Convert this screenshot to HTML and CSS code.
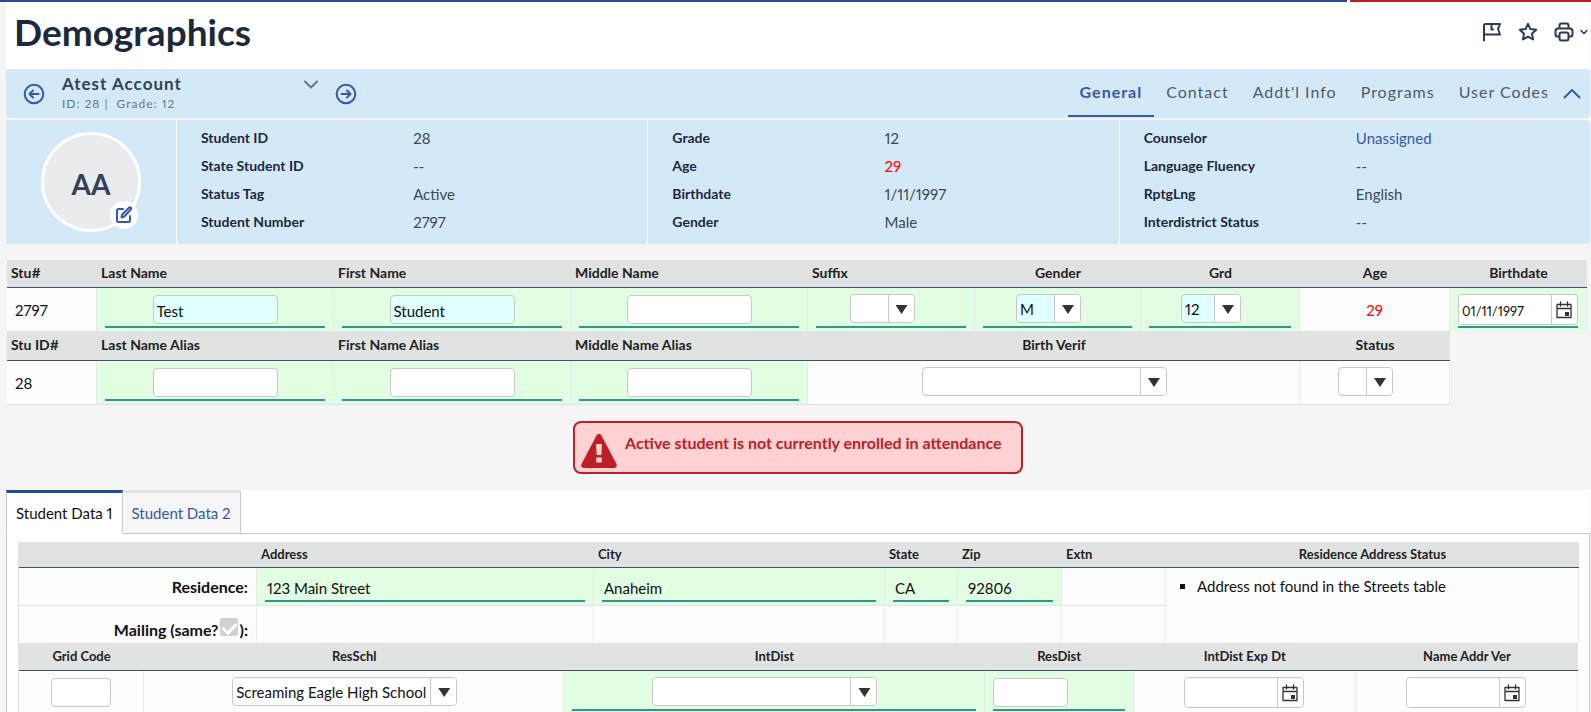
FILE: index.html
```html
<!DOCTYPE html>
<html lang="en">
<head>
    <meta charset="UTF-8">
    <meta name="viewport" content="width=device-width, initial-scale=1.0">
    <title>Demographics</title>
    <link rel="stylesheet" href="styles.css">
</head>
<body>
    <div class="top-bar"><span class="top-blue"></span><span class="top-red"></span></div>

    <div class="page">
        <header class="page-header">
            <h1>Demographics</h1>
            <div class="page-tools">
                <button type="button" class="icon-btn" aria-label="Flag">
                    <svg width="20" height="20" viewBox="0 0 20 20" class="line-icon"><path d="M2 18.500V3.500q0-1.500 1.500-1.500H18l-2 5 2 5.500H2M9.500 2v5.500h1.500"/></svg>
                </button>
                <button type="button" class="icon-btn" aria-label="Favorite">
                    <svg width="20" height="20" viewBox="0 0 20 20" class="line-icon"><path d="M10 1.800l2.400 5.300 5.800.7-4.300 3.900 1.200 5.800-5.100-2.900-5.100 2.900 1.200-5.800L1.800 7.800l5.800-.7z"/></svg>
                </button>
                <button type="button" class="icon-btn" aria-label="Print">
                    <svg width="20" height="20" viewBox="0 0 20 20" class="line-icon"><path d="M5.500 6.500V3.500q0-2 2-2h5q2 0 2 2v3M5.500 14.500h-2q-2 0-2-2V9q0-2.500 2.500-2.500h12q2.500 0 2.500 2.500v3.500q0 2-2 2h-2M7.500 10.500h5q2 0 2 2v4q0 2-2 2h-5q-2 0-2-2v-4q0-2 2-2z"/></svg>
                    <svg width="8" height="6" viewBox="0 0 8 6" class="thin-icon"><path d="M1 1.500l3 3 3-3"/></svg>
                </button>
            </div>
        </header>

        <div class="student-bar">
            <button type="button" class="icon-btn" aria-label="Previous student">
                <svg width="22" height="22" viewBox="0 0 22 22" class="blue-icon"><circle cx="11" cy="11" r="9.300"/><path d="M15.500 11H7M10 7.500L6.500 11l3.500 3.500"/></svg>
            </button>
            <div class="student-pick">
                <div>
                    <div class="student-name">Atest Account</div>
                    <div class="student-meta">ID: 28 |&nbsp; Grade: 12</div>
                </div>
                <button type="button" class="icon-btn" aria-label="Choose student">
                    <svg width="14" height="9" viewBox="0 0 14 9" class="gray-icon"><path d="M1 1.500l6 6 6-6"/></svg>
                </button>
            </div>
            <button type="button" class="icon-btn" aria-label="Next student">
                <svg width="22" height="22" viewBox="0 0 22 22" class="blue-icon"><circle cx="11" cy="11" r="9.300"/><path d="M6.500 11H15M12 7.500l3.500 3.500-3.500 3.500"/></svg>
            </button>
            <nav class="student-nav">
                <a href="#" class="active">General</a>
                <a href="#">Contact</a>
                <a href="#">Addt'l Info</a>
                <a href="#">Programs</a>
                <a href="#">User Codes</a>
            </nav>
            <button type="button" class="icon-btn collapse" aria-label="Collapse">
                <svg width="18" height="11" viewBox="0 0 18 11" class="blue-icon"><path d="M1.500 9.500L9 2l7.500 7.500"/></svg>
            </button>
        </div>

        <section class="summary">
            <div class="avatar-cell">
                <div class="avatar">
                    AA
                    <button type="button" class="avatar-edit" aria-label="Edit photo">
                        <svg width="18" height="18" viewBox="0 0 18 18" class="blue-icon"><path d="M8 3H3.500Q2 3 2 4.500v10Q2 16 3.500 16h10q1.500 0 1.500-1.500V10M6.500 11.500l.7-3 6.800-6.800q1-.8 1.800 0t0 1.800L9.200 10.500z"/></svg>
                    </button>
                </div>
            </div>
            <dl>
                <dt>Student ID</dt><dd>28</dd>
                <dt>State Student ID</dt><dd>--</dd>
                <dt>Status Tag</dt><dd>Active</dd>
                <dt>Student Number</dt><dd>2797</dd>
            </dl>
            <dl>
                <dt>Grade</dt><dd>12</dd>
                <dt>Age</dt><dd class="red">29</dd>
                <dt>Birthdate</dt><dd>1/11/1997</dd>
                <dt>Gender</dt><dd>Male</dd>
            </dl>
            <dl>
                <dt>Counselor</dt><dd><a href="#">Unassigned</a></dd>
                <dt>Language Fluency</dt><dd>--</dd>
                <dt>RptgLng</dt><dd>English</dd>
                <dt>Interdistrict Status</dt><dd>--</dd>
            </dl>
        </section>

        <table class="grid names">
            <colgroup>
                <col class="c-id"><col class="c-name"><col class="c-name"><col class="c-name"><col class="c-suffix"><col class="c-gender"><col class="c-grade"><col class="c-age"><col class="c-birth">
            </colgroup>
            <tr>
                <th class="left">Stu#</th>
                <th class="left"><label for="last">Last Name</label></th>
                <th class="left"><label for="first">First Name</label></th>
                <th class="left"><label for="middle">Middle Name</label></th>
                <th class="left"><label for="suffix">Suffix</label></th>
                <th><label for="gender">Gender</label></th>
                <th><label for="grade">Grd</label></th>
                <th>Age</th>
                <th><label for="birth">Birthdate</label></th>
            </tr>
            <tr>
                <td class="plain">2797</td>
                <td class="edit"><div class="field"><input type="text" id="last" class="filled" value="Test"></div></td>
                <td class="edit"><div class="field"><input type="text" id="first" class="filled" value="Student"></div></td>
                <td class="edit"><div class="field"><input type="text" id="middle"></div></td>
                <td class="edit"><div class="field with-combo"><span class="combo w65"><select id="suffix"><option></option></select></span></div></td>
                <td class="edit"><div class="field with-combo"><span class="combo w65"><select id="gender" class="filled"><option>M</option></select></span></div></td>
                <td class="edit"><div class="field with-combo"><span class="combo w60"><select id="grade" class="filled"><option>12</option></select></span></div></td>
                <td class="center red">29</td>
                <td class="edit"><div class="field with-date"><span class="date"><input type="text" id="birth" value="01/11/1997"><button type="button" aria-label="Open calendar"><svg width="16" height="18" viewBox="0 0 16 18"><path d="M1 3.500h14v13H1zM1 7.500h14M4.500 1v4M11.500 1v4"/><rect x="9" y="11" width="4" height="4"/></svg></button></span></div></td>
            </tr>
            <tr>
                <th class="left tall">Stu ID#</th>
                <th class="left"><label for="last-alias">Last Name Alias</label></th>
                <th class="left"><label for="first-alias">First Name Alias</label></th>
                <th class="left"><label for="middle-alias">Middle Name Alias</label></th>
                <th colspan="3"><label for="verif">Birth Verif</label></th>
                <th><label for="status">Status</label></th>
                <td class="blank" rowspan="2"></td>
            </tr>
            <tr>
                <td class="plain">28</td>
                <td class="edit"><div class="field"><input type="text" id="last-alias"></div></td>
                <td class="edit"><div class="field"><input type="text" id="first-alias"></div></td>
                <td class="edit"><div class="field"><input type="text" id="middle-alias"></div></td>
                <td colspan="3"><div class="field with-combo no-line"><span class="combo w245"><select id="verif"><option></option></select></span></div></td>
                <td><div class="field with-combo no-line"><span class="combo w55"><select id="status"><option></option></select></span></div></td>
            </tr>
        </table>

        <div class="alert" role="alert">
            <svg width="36" height="36" viewBox="0 0 36 36"><path fill="#bb2026" d="M15.500 2.500q2.500-3.500 5 0L35.500 31q1.200 3.500-2 4h-31q-3.200-.5-2-4z"/><path fill="#fed2d2" d="M15 11h6l-.7 11h-4.600zM15.300 24.500h5.400v5h-5.400z"/></svg>
            <span>Active student is not currently enrolled in attendance</span>
        </div>

        <div class="tabs-wrap">
            <div class="tabs">
                <a href="#" class="tab current">Student Data 1</a>
                <a href="#" class="tab">Student Data 2</a>
                <span class="tabs-rest"></span>
            </div>
            <div class="tab-body">
                <table class="grid small">
                    <colgroup>
                        <col class="c-rowhead"><col class="c-addr"><col class="c-city"><col class="c-state"><col class="c-zip"><col class="c-zip"><col class="c-note">
                    </colgroup>
                    <tr>
                        <th></th>
                        <th class="left">Address</th>
                        <th class="left">City</th>
                        <th class="left">State</th>
                        <th class="left">Zip</th>
                        <th class="left">Extn</th>
                        <th>Residence Address Status</th>
                    </tr>
                    <tr class="short">
                        <td class="row-head">Residence:</td>
                        <td class="edit"><div class="field text">123 Main Street</div></td>
                        <td class="edit"><div class="field text">Anaheim</div></td>
                        <td class="edit"><div class="field text">CA</div></td>
                        <td class="edit"><div class="field text">92806</div></td>
                        <td></td>
                        <td rowspan="2" class="note"><ul><li>Address not found in the Streets table</li></ul></td>
                    </tr>
                    <tr class="short">
                        <td class="row-head low"><label for="same">Mailing (same?<input type="checkbox" id="same" checked disabled>):</label></td>
                        <td></td>
                        <td></td>
                        <td></td>
                        <td></td>
                        <td></td>
                    </tr>
                </table>
                <table class="grid small">
                    <colgroup>
                        <col class="c-code"><col class="c-school"><col class="c-school"><col class="c-res"><col class="c-date"><col class="c-date">
                    </colgroup>
                    <tr>
                        <th class="tall"><label for="grid-code">Grid Code</label></th>
                        <th><label for="school">ResSchl</label></th>
                        <th><label for="intdist">IntDist</label></th>
                        <th><label for="resdist">ResDist</label></th>
                        <th><label for="exp">IntDist Exp Dt</label></th>
                        <th><label for="ver">Name Addr Ver</label></th>
                    </tr>
                    <tr>
                        <td><div class="field no-line"><input type="text" id="grid-code" class="w60"></div></td>
                        <td><div class="field with-combo no-line"><span class="combo w225"><select id="school"><option>Screaming Eagle High School</option></select></span></div></td>
                        <td class="edit"><div class="field with-combo"><span class="combo w225"><select id="intdist"><option></option></select></span></div></td>
                        <td class="edit"><div class="field start"><input type="text" id="resdist" class="w75"></div></td>
                        <td><div class="field with-date no-line"><span class="date"><input type="text" id="exp"><button type="button" aria-label="Open calendar"><svg width="16" height="18" viewBox="0 0 16 18"><path d="M1 3.500h14v13H1zM1 7.500h14M4.500 1v4M11.500 1v4"/><rect x="9" y="11" width="4" height="4"/></svg></button></span></div></td>
                        <td><div class="field with-date no-line"><span class="date"><input type="text" id="ver"><button type="button" aria-label="Open calendar"><svg width="16" height="18" viewBox="0 0 16 18"><path d="M1 3.500h14v13H1zM1 7.500h14M4.500 1v4M11.500 1v4"/><rect x="9" y="11" width="4" height="4"/></svg></button></span></div></td>
                    </tr>
                </table>
            </div>
        </div>
    </div>
</body>
</html>
```
FILE: styles.css
```css
* {
    box-sizing: border-box;
}

body {
    margin: 0;
    height: 100vh;
    overflow: hidden;
    background: #f5f5f5;
    color: #111;
    font-family: Lato, sans-serif;
    font-size: 15px;
    font-variant-numeric: proportional-nums;
}

a {
    color: #3558a8;
    text-decoration: none;
}

svg {
    display: block;
    fill: none;
    stroke-linecap: round;
    stroke-linejoin: round;
}

.line-icon {
    stroke: #2d3b52;
    stroke-width: 2;
}

.thin-icon {
    stroke: #2d3b52;
    stroke-width: 1.5;
}

.blue-icon {
    stroke: #3558a8;
    stroke-width: 2;
}

.gray-icon {
    stroke: #66758a;
    stroke-width: 2;
}

/* top stripe */
.top-bar {
    display: flex;
    gap: 3px;
    height: 2px;
    background: #fff;
}

.top-blue {
    flex: 67;
    background: #274b96;
}

.top-red {
    flex: 12;
    background: #bb2026;
}

.page {
    margin: 0 1px 0 6px;
}

.page-header {
    display: flex;
    justify-content: space-between;
    align-items: center;
    height: 67px;
    padding: 0 2px 8px 8px;
    background: #fff;
}

h1 {
    margin: 0;
    color: #1c283c;
    font-size: 37px;
    line-height: 44px;
}

.page-tools {
    display: flex;
    gap: 16px;
}

.icon-btn {
    display: flex;
    align-items: center;
    gap: 6px;
    padding: 0;
    border: 0;
    background: none;
    cursor: pointer;
}

/* student bar */
.student-bar {
    display: flex;
    align-items: center;
    height: 49px;
    margin-bottom: 2px;
    padding: 0 9px 0 17px;
    border-radius: 4px;
    background: #d4e9f8;
}

.student-pick {
    display: flex;
    justify-content: space-between;
    width: 256px;
    margin: 0 17px;
}

.student-pick .icon-btn {
    height: 22px;
}

.student-name {
    color: #354056;
    font-size: 17px;
    font-weight: bold;
    line-height: 20px;
    letter-spacing: 1px;
}

.student-meta {
    color: #66758a;
    font-size: 12px;
    line-height: 20px;
    letter-spacing: 1px;
}

.student-nav {
    display: flex;
    align-self: stretch;
    margin: 0 2px 0 auto;
}

.student-nav a {
    height: 48px;
    padding: 0 12px;
    border-bottom: 2px solid transparent;
    color: #4d596b;
    font-size: 16px;
    line-height: 46px;
    letter-spacing: 1px;
}

.student-nav .active {
    border-color: #3558a8;
    color: #3558a8;
    font-weight: bold;
}

/* summary */
.summary {
    display: grid;
    grid-template-columns: 170px 1fr 1fr 1fr;
    border-radius: 0 4px 4px 0;
    background: #d4e9f8;
}

.avatar-cell {
    display: flex;
    justify-content: center;
    align-items: center;
}

.avatar {
    position: relative;
    width: 100px;
    height: 100px;
    border: 3px solid #fff;
    border-radius: 50%;
    background: #eaebef;
    color: #354056;
    font-size: 28px;
    font-weight: bold;
    line-height: 98px;
    text-align: center;
}

.avatar-edit {
    display: flex;
    justify-content: center;
    align-items: center;
    position: absolute;
    right: 0;
    bottom: 0;
    width: 28px;
    height: 28px;
    padding: 0;
    border: 0;
    border-radius: 50%;
    background: #fff;
}

.summary dl {
    display: grid;
    grid-template-columns: 1fr 1fr;
    margin: 0;
    padding: 4px 22px 8px 24px;
    border-left: 1px solid #fff;
    line-height: 28px;
}

.summary dt {
    color: #1c283c;
    font-size: 14px;
    font-weight: bold;
}

.summary dd {
    margin: 0;
    color: #3c475a;
}

.summary .red,
.red {
    color: #f00;
}

/* data grids */
.grid {
    width: 100%;
    table-layout: fixed;
    border-collapse: separate;
    border-spacing: 0;
}

.names {
    width: auto;
    min-width: calc(100% - 4px);
    margin: 16px 3px 0 1px;
}

.names .c-id { width: 90px; }
.c-name { width: 237px; }
.c-suffix { width: 167px; }
.c-gender { width: 166px; }
.c-grade { width: 159px; }
.c-age { width: 150px; }
.c-birth { width: 137px; }

.c-rowhead { width: 238px; }
.c-addr { width: 337px; }
.c-city { width: 291px; }
.c-state { width: 73px; }
.c-zip { width: 104px; }
.c-note { width: 413px; }

.c-code { width: 125px; }
.c-school { width: 420px; }
.c-res { width: 149px; }
.c-date { width: 222px; }

.grid th {
    height: 28px;
    padding: 0 4px 2px;
    border-bottom: 1px solid #3f5173;
    background: #e1e3e2;
    color: #222;
    font-size: 14px;
}

.grid .left {
    text-align: left;
}

.names .tall {
    height: 30px;
}

.grid td {
    height: 43px;
    padding: 0 8px;
    border-right: 1px solid #e4ecee;
    background: #fdfdfd;
}

.names tr:last-child td {
    height: 44px;
    border-bottom: 1px solid #e1e3e2;
}

.grid .edit {
    background: #e2fee2;
}

.names .blank {
    border: 0;
    background: none;
}

.center {
    text-align: center;
}

.field {
    display: flex;
    justify-content: center;
    height: 37px;
    padding-top: 4px;
    border-bottom: 2px solid #319592;
}

.with-combo {
    padding: 3px 18px 0 0;
}

.with-date {
    padding-top: 3px;
}

.start {
    justify-content: flex-start;
}

.no-line {
    border-color: transparent;
}

input,
select {
    min-width: 0;
    border: 1px solid #c8c8c8;
    border-radius: 4px;
    background: #fff;
    color: #111;
    font: inherit;
}

.field input {
    width: 125px;
    height: 29px;
    padding: 2px 3px 0;
}

.filled,
.field .filled {
    background: #e0ffff;
}

.combo {
    display: block;
    position: relative;
    height: 29px;
}

.combo select {
    appearance: none;
    width: 100%;
    height: 29px;
    padding: 1px 26px 0 3px;
}

/* drop button */
.combo::before {
    content: "";
    position: absolute;
    top: 1px;
    right: 1px;
    bottom: 1px;
    width: 25px;
    border-left: 1px solid #c8c8c8;
    border-radius: 0 3px 3px 0;
    background: #fff;
    pointer-events: none;
}

.combo::after {
    content: "";
    position: absolute;
    top: 11px;
    right: 7px;
    width: 12px;
    height: 9px;
    background: #333;
    clip-path: polygon(0 0, 100% 0, 50% 100%);
    pointer-events: none;
}

.w55 { width: 55px; }
.w60,
.field .w60 { width: 60px; }
.w65 { width: 65px; }
.field .w75 { width: 75px; }
.w225 { width: 225px; }
.w245 { width: 245px; }

.date {
    display: flex;
    width: 120px;
    height: 31px;
    border: 1px solid #c8c8c8;
    border-radius: 4px;
    background: #fff;
}

.date input {
    flex: 1;
    width: 0;
    border: 0;
    font-size: 13px;
}

.date button {
    width: 26px;
    padding: 0 4px;
    border: 0;
    border-left: 1px solid #c8c8c8;
    background: none;
}

.date path {
    stroke: #333;
    stroke-width: 1.3;
}

.date rect {
    fill: #333;
}

/* alert */
.alert {
    display: flex;
    gap: 8px;
    width: 450px;
    height: 53px;
    margin: 16px auto;
    padding: 10px 6px 0;
    border: 2px solid #bb2026;
    border-radius: 8px;
    background: #fed2d2;
    color: #bb2026;
    font-size: 16px;
    font-weight: bold;
    line-height: 20px;
    white-space: nowrap;
}

/* tabs */
.tabs-wrap {
    background: #fff;
}

.tabs {
    display: flex;
}

.tab {
    height: 44px;
    padding: 0 9px;
    border: 1px solid #c8c8c8;
    border-top: 3px solid #e1e3e2;
    border-left: 0;
    background: #f6f6f6;
    line-height: 40px;
}

.current {
    border-top-color: #274b96;
    border-bottom-color: #fff;
    border-left: 1px solid #c8c8c8;
    background: #fff;
    color: #111;
}

.tabs-rest {
    flex: 1;
    border-bottom: 1px solid #c8c8c8;
}

.tab-body {
    padding: 8px 11px 40px;
    border: 1px solid #c8c8c8;
    border-top: 0;
}

.small {
    border-left: 1px solid #e1e3e2;
}

.small th {
    height: 26px;
    font-size: 13px;
}

.small .tall {
    height: 28px;
}

.short td {
    height: 38px;
    border-bottom: 1px solid #e1e3e2;
}

.short:last-child td,
.short .note {
    border-bottom: 0;
}

.short:last-child td {
    height: 37px;
}

.short .row-head {
    font-size: 16px;
    font-weight: bold;
    text-align: right;
}

.short .low {
    padding-bottom: 4px;
    vertical-align: bottom;
}

.row-head input {
    appearance: none;
    width: 18px;
    height: 18px;
    margin: 0 1px 0 2px;
    border: 0;
    border-radius: 2px;
    background: #d0d0d0;
    vertical-align: baseline;
}

.row-head input::before {
    content: "";
    display: block;
    width: 6px;
    height: 11px;
    margin: 2px auto;
    border: solid #fff;
    border-width: 0 3px 3px 0;
    transform: rotate(45deg);
}

.text {
    justify-content: flex-start;
    height: 30px;
    padding: 2px 2px 0;
    line-height: 28px;
}

.note ul {
    margin: 0;
    padding-left: 23px;
    list-style: square;
}

.short .note {
    padding-top: 9px;
    vertical-align: top;
}
```
